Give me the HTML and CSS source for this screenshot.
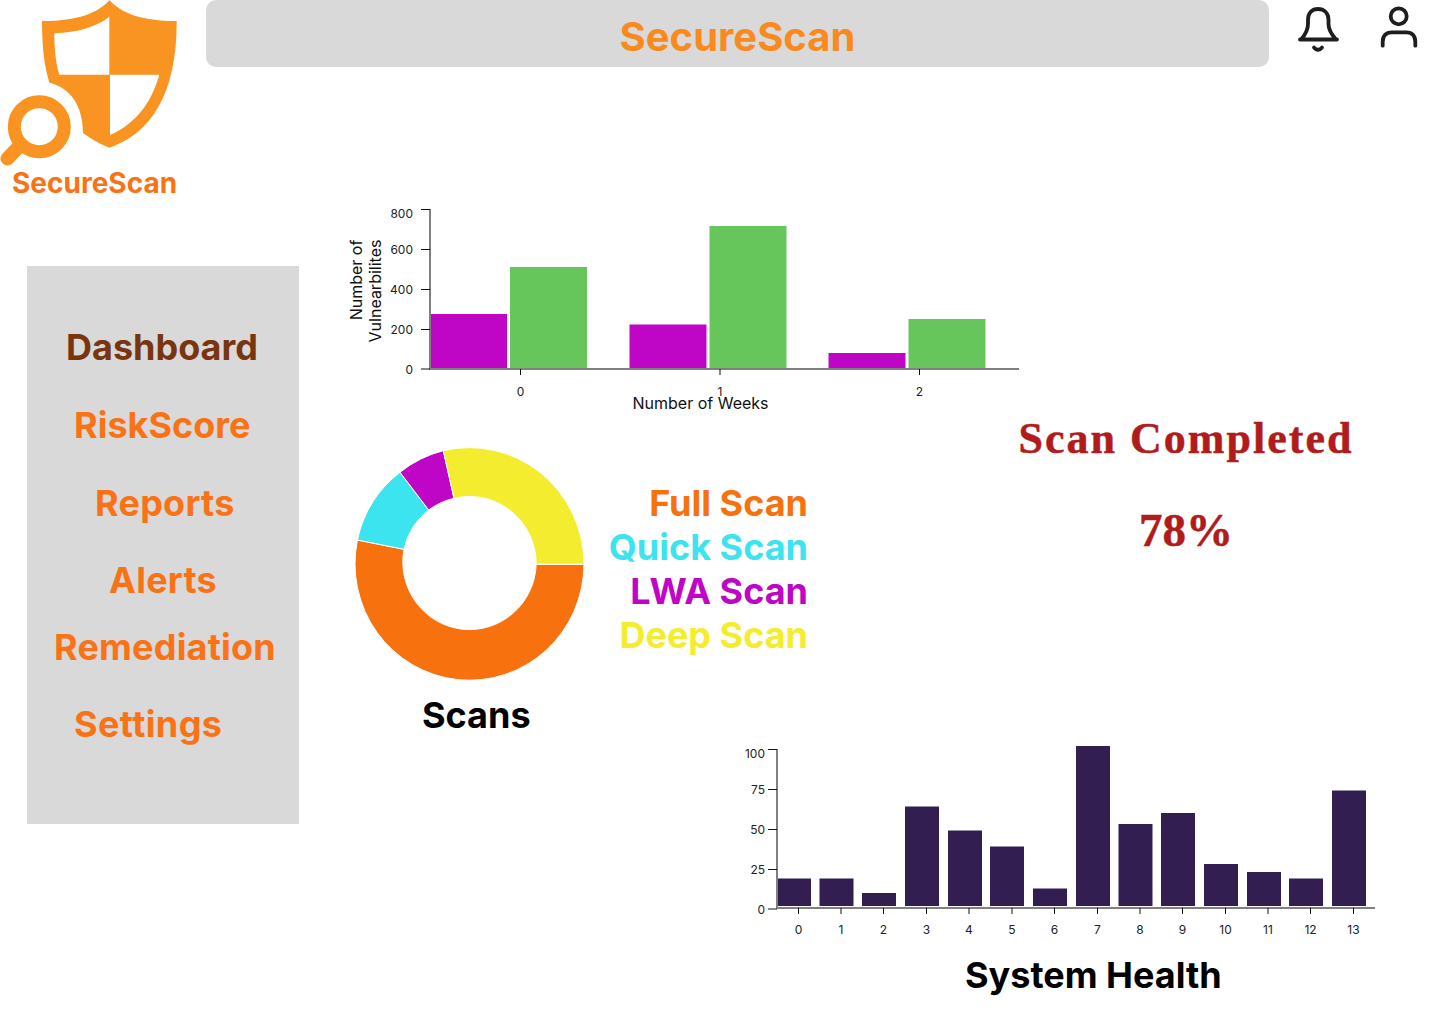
FILE: index.html
```html
<!DOCTYPE html>
<html lang="en">
<head>
<meta charset="utf-8">
<title>SecureScan</title>
<link rel="stylesheet" href="styles.css">
</head>
<body>
<div class="page">
  <header class="topbar">
    <div class="logo">
      <svg class="logo-mark" viewBox="0 0 180 165" width="180" height="165" aria-hidden="true">
        <path class="logo-fill" fill-rule="evenodd" d="M109.5 0C98 13 78 21 42 21C42 45 44 66 49.5 82.7C68 87 83 103 83 133C91 139 100 144 109.5 147.7C150 134 177 95 176.7 21C141 21 121 13 109.5 0ZM109.3 16.7V74.7H59.3C55.5 62 54.3 48 54.3 33.3C78 32.5 96 27 109.3 16.7ZM110 74.7H159.3C151 104 135 124 110 135Z"/>
        <circle class="logo-ring" cx="39.3" cy="126.7" r="25"/>
        <line class="logo-handle" x1="18" y1="147.5" x2="7.5" y2="158.5"/>
      </svg>
      <div class="logo-text">SecureScan</div>
    </div>
    <div class="titlebar">SecureScan</div>
    <div class="top-icons">
      <svg class="bell" viewBox="1296 4 44 50" width="44" height="50" aria-hidden="true">
        <path class="icon-stroke" d="M1300 39.5H1337M1301 39.5C1305 35 1308 30 1308 24V20C1308 13 1312 9 1318 9C1324 9 1328.5 13 1328.5 20V24C1328.5 30 1332 35 1336 39.5M1314 47.5C1316 50.5 1320 50.5 1322 47.5"/>
      </svg>
      <svg class="user" viewBox="1380 4 38 44" width="38" height="44" aria-hidden="true">
        <circle class="icon-stroke" cx="1398.7" cy="16.3" r="8"/>
        <path class="icon-stroke" d="M1382.7 45.7V41.7C1382.7 36 1386 32.3 1391.7 32.3H1406.7C1412 32.3 1415.3 36 1415.3 41.7V45.7"/>
      </svg>
    </div>
  </header>

  <div class="content">
    <nav class="sidebar">
      <a class="nav-item nav-active nav-dashboard">Dashboard</a>
      <a class="nav-item nav-risk">RiskScore</a>
      <a class="nav-item nav-reports">Reports</a>
      <a class="nav-item nav-alerts">Alerts</a>
      <a class="nav-item nav-remediation">Remediation</a>
      <a class="nav-item nav-settings">Settings</a>
    </nav>

    <main class="main">
      <svg class="chart" viewBox="345 205 680 210" width="680" height="210">
        <g class="purple">
          <rect x="430" y="314" width="77" height="55"/>
          <rect x="629.5" y="324.5" width="77" height="44.5"/>
          <rect x="828.5" y="353" width="77" height="16"/>
        </g>
        <g class="green">
          <rect x="510" y="267" width="77" height="102"/>
          <rect x="709.5" y="226" width="77" height="143"/>
          <rect x="908.5" y="319" width="77" height="50"/>
        </g>
        <path class="axis" d="M430 209V369H1019"/>
        <path class="tick" d="M421 209.5H430M421 249.5H430M421 289.5H430M421 329.5H430M421 369H430M520.5 369V375M720 369V375M919.5 369V375"/>
        <g class="tick-label tl-end">
          <text x="413" y="218">800</text>
          <text x="413" y="254">600</text>
          <text x="413" y="294">400</text>
          <text x="413" y="334">200</text>
          <text x="413" y="374">0</text>
        </g>
        <g class="tick-label tl-mid">
          <text x="520.5" y="396">0</text>
          <text x="720" y="396">1</text>
          <text x="919.5" y="396">2</text>
        </g>
        <text class="axis-title tl-mid" x="700.5" y="409">Number of Weeks</text>
        <text class="axis-title tl-mid" transform="translate(362 280) rotate(-90)">Number of</text>
        <text class="axis-title tl-mid" transform="translate(381 291) rotate(-90)">Vulnearbilites</text>
      </svg>

      <section class="scan-row">
        <figure class="donut">
          <svg viewBox="345 440 250 250" width="250" height="250">
            <path class="seg seg-orange" d="M584 564.2A114.5 116.5 0 1 1 357.4 540L404 549.3A66.7 67.7 0 1 0 536.2 564.2Z"/>
            <path class="seg seg-cyan" d="M357.4 540A114.5 116.5 0 0 1 400 472.3L428.7 510A66.7 67.7 0 0 0 404 549.3Z"/>
            <path class="seg seg-purple" d="M400 472.3A114.5 116.5 0 0 1 443.3 450.7L454 498.3A66.7 67.7 0 0 0 428.7 510Z"/>
            <path class="seg seg-yellow" d="M443.3 450.7A114.5 116.5 0 0 1 584 564.2H536.2A66.7 67.7 0 0 0 454 498.3Z"/>
          </svg>
          <figcaption class="caption">Scans</figcaption>
        </figure>
        <ul class="legend">
          <li class="lg-orange">Full Scan</li>
          <li class="lg-cyan">Quick Scan</li>
          <li class="lg-purple">LWA Scan</li>
          <li class="lg-yellow">Deep Scan</li>
        </ul>
        <div class="status">
          <div class="status-title">Scan Completed</div>
          <div class="status-value">78%</div>
        </div>
      </section>

      <figure class="health">
        <svg viewBox="745 740 635 180" width="635" height="180" class="health-svg">
          <g class="indigo">
            <rect x="777" y="878.5" width="34" height="27.5"/>
            <rect x="819.5" y="878.5" width="34" height="27.5"/>
            <rect x="862" y="893" width="34" height="13"/>
            <rect x="905" y="806.5" width="34" height="99.5"/>
            <rect x="948" y="830.5" width="34" height="75.5"/>
            <rect x="990" y="846.5" width="34" height="59.5"/>
            <rect x="1033" y="888.5" width="34" height="17.5"/>
            <rect x="1076" y="746" width="34" height="160"/>
            <rect x="1118.5" y="824" width="34" height="82"/>
            <rect x="1161" y="813" width="34" height="93"/>
            <rect x="1204" y="864" width="34" height="42"/>
            <rect x="1247" y="872" width="34" height="34"/>
            <rect x="1289" y="878.5" width="34" height="27.5"/>
            <rect x="1332" y="790.5" width="34" height="115.5"/>
          </g>
          <path class="axis" d="M777 749V908H1375"/>
          <path class="tick" d="M768 749.5H777M768 789.5H777M768 829.5H777M768 869.5H777M768 909H777M798.5 908V914M841 908V914M883.5 908V914M926.5 908V914M969 908V914M1012 908V914M1054.5 908V914M1097.5 908V914M1140 908V914M1182.5 908V914M1225.5 908V914M1268 908V914M1310.5 908V914M1353.5 908V914"/>
          <g class="tick-label tl-end">
            <text x="765" y="758">100</text>
            <text x="765" y="794">75</text>
            <text x="765" y="834">50</text>
            <text x="765" y="874">25</text>
            <text x="765" y="914">0</text>
          </g>
          <g class="tick-label tl-mid">
            <text x="798.5" y="934">0</text>
            <text x="841" y="934">1</text>
            <text x="883.5" y="934">2</text>
            <text x="926.5" y="934">3</text>
            <text x="969" y="934">4</text>
            <text x="1012" y="934">5</text>
            <text x="1054.5" y="934">6</text>
            <text x="1097.5" y="934">7</text>
            <text x="1140" y="934">8</text>
            <text x="1182.5" y="934">9</text>
            <text x="1225.5" y="934">10</text>
            <text x="1268" y="934">11</text>
            <text x="1310.5" y="934">12</text>
            <text x="1353.5" y="934">13</text>
          </g>
        </svg>
        <figcaption class="caption health-caption">System Health</figcaption>
      </figure>
    </main>
  </div>
</div>
</body>
</html>
```
FILE: styles.css
```css
* { box-sizing: border-box; }
html, body { margin: 0; padding: 0; background: #fff; }
body { font-family: "Inter", "Liberation Sans", sans-serif; }
.page { width: 1440px; height: 1024px; overflow: hidden; display: flex; flex-direction: column; }
svg { display: block; overflow: visible; }
figure { margin: 0; }

/* top bar */
.topbar { display: flex; height: 205px; align-items: flex-start; flex: none; }
.logo { width: 206px; flex: none; }
.logo-mark { height: 165px; }
.logo-fill { fill: #f99321; }
.logo-ring { fill: none; stroke: #f99321; stroke-width: 13; }
.logo-handle { stroke: #f99321; stroke-width: 14; stroke-linecap: round; }
.logo-text { margin: 0 0 0 12px; font-size: 28px; line-height: 36px; font-weight: 700; color: #f97316; white-space: nowrap; }
.titlebar { width: 1063px; height: 67px; flex: none; border-radius: 10px; background: #d9d9d9; color: #f98a1e; font-size: 40px; font-weight: 700; line-height: 74px; text-align: center; }
.top-icons { display: flex; align-items: flex-start; padding: 4px 0 0 27px; gap: 40px; }
.icon-stroke { fill: none; stroke: #1e1e1e; stroke-width: 3.8; stroke-linecap: round; stroke-linejoin: round; }

/* sidebar */
.content { display: flex; flex: 1; align-items: flex-start; }
.sidebar { margin: 61px 0 0 27px; width: 272px; height: 558px; flex: none; background: #d9d9d9; display: flex; flex-direction: column; align-items: flex-start; padding-top: 59px; }
.nav-item { font-size: 36px; line-height: 44px; font-weight: 700; color: #f97316; white-space: nowrap; }
.nav-active { color: #78350f; }
.nav-dashboard { margin-left: 39px; }
.nav-risk { margin: 34px 0 0 47px; }
.nav-reports { margin: 34px 0 0 68px; letter-spacing: 0.25px; }
.nav-alerts { margin: 33px 0 0 82px; letter-spacing: 0.25px; }
.nav-remediation { margin: 23px 0 0 27px; letter-spacing: 0.2px; }
.nav-settings { margin: 33px 0 0 47px; letter-spacing: 0.4px; }

/* main */
.main { margin-left: 46px; flex: 1; display: flex; flex-direction: column; }
.chart { flex: none; }
.axis { fill: none; stroke: #808080; stroke-width: 2; }
.tick { fill: none; stroke: #111; stroke-width: 1; }
.purple { fill: #bf05c5; }
.green { fill: #66c65c; }
.indigo { fill: #321e50; }
.tick-label { font-size: 12px; fill: #222; }
.tl-end { text-anchor: end; }
.tl-mid { text-anchor: middle; }
.axis-title { font-size: 16px; fill: #111; }

.scan-row { display: flex; align-items: flex-start; height: 325px; flex: none; }
.donut { width: 262px; flex: none; padding-top: 25px; }
.seg { stroke: #fff; stroke-width: 1; }
.seg-orange { fill: #f8710f; }
.seg-cyan { fill: #3ce4ef; }
.seg-purple { fill: #bf05c5; }
.seg-yellow { fill: #f4ec2f; }
.caption { font-size: 36px; line-height: 44px; font-weight: 700; color: #000; }
.donut .caption { margin: 3px 0 0 77px; }

.legend { list-style: none; margin: 66px 0 0 0; padding: 0; width: 201px; font-size: 36px; line-height: 44px; font-weight: 700; text-align: right; white-space: nowrap; }
.lg-orange { color: #f8710f; }
.lg-cyan { color: #3ce4ef; }
.lg-purple { color: #bf05c5; }
.lg-yellow { color: #f4ec2f; }

.status { width: 340px; margin: -1px 0 0 208px; text-align: center; color: #b01c1c; font-family: "Liberation Serif", serif; font-weight: 700; -webkit-text-stroke: 0.5px #b01c1c; }
.status-title { font-size: 44px; line-height: 50px; letter-spacing: 2px; white-space: nowrap; }
.status-value { font-size: 47px; line-height: 60px; margin-top: 36px; }

.health { margin-left: 400px; }
.health-caption { margin: 33px 0 0 220px; }
```
